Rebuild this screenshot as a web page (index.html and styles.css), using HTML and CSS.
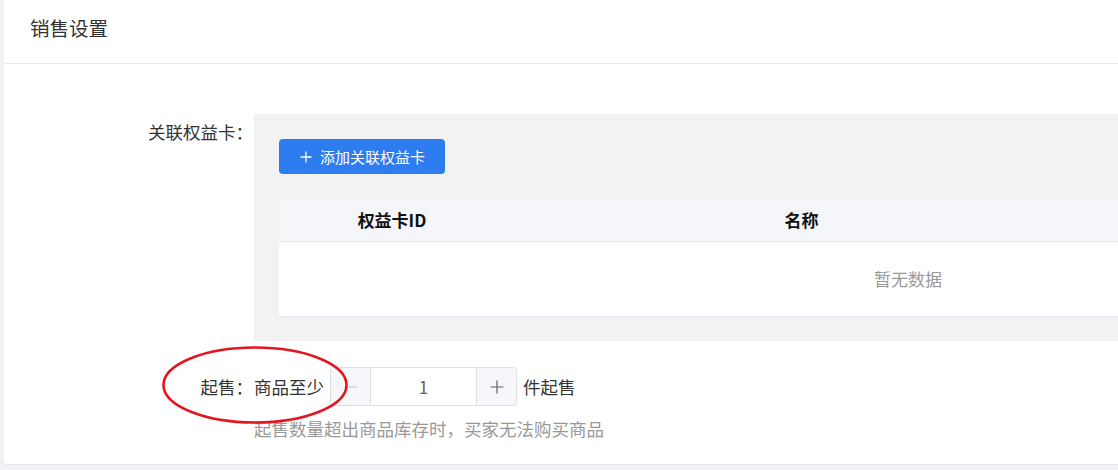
FILE: index.html
```html
<!DOCTYPE html>
<html lang="zh-CN">
<head>
<meta charset="utf-8">
<title>销售设置</title>
<link rel="stylesheet" href="styles.css">
</head>
<body>
<div class="page">
  <div class="card">
    <div class="card-header">销售设置</div>
    <div class="card-body">
      <div class="form-item">
        <div class="form-label label-top">关联权益卡：</div>
        <div class="panel">
          <button class="btn-primary" type="button">
            <svg class="btn-icon" width="12" height="12" viewBox="0 0 12 12"><path d="M6 0.5V11.5M0.5 6H11.5" stroke="#fff" stroke-width="1.3" fill="none"/></svg>
            <span>添加关联权益卡</span>
          </button>
          <div class="table">
            <div class="thead">
              <div class="th col-id">权益卡ID</div>
              <div class="th col-name">名称</div>
              <div class="th col-rest"></div>
            </div>
            <div class="tbody">暂无数据</div>
          </div>
        </div>
      </div>
      <div class="form-item item-min">
        <div class="form-label label-mid">起售：</div>
        <div class="form-content">
          <div class="inline-row">
            <span class="text">商品至少</span>
            <div class="input-number">
              <span class="step step-minus"><svg width="14" height="14" viewBox="0 0 14 14"><path d="M0.5 7H13.5" stroke="#c0c4cc" stroke-width="1.2"/></svg></span>
              <span class="value">1</span>
              <span class="step step-plus"><svg width="14" height="14" viewBox="0 0 14 14"><path d="M7 0.5V13.5M0.5 7H13.5" stroke="#606266" stroke-width="1.2"/></svg></span>
            </div>
            <span class="text">件起售</span>
          </div>
          <div class="hint">起售数量超出商品库存时，买家无法购买商品</div>
        </div>
      </div>
    </div>
  </div>
  <svg class="annotation" width="190" height="82" viewBox="0 0 190 82"><ellipse cx="94" cy="40" rx="91.5" ry="37.5" fill="none" stroke="#e3151f" stroke-width="2.6"/></svg>
</div>
</body>
</html>
```

FILE: styles.css
```css
* { box-sizing: border-box; }

html, body {
  margin: 0;
  padding: 0;
  background: #f0f2f5;
  width: 1118px;
  height: 470px;
  overflow: hidden;
}

body {
  font-family: "Noto Sans CJK SC", "Noto Sans", sans-serif;
  color: #333;
}

.page {
  position: relative;
  width: 1118px;
  height: 470px;
  overflow: hidden;
}

.card {
  margin-left: 4px;
  width: 1600px;
  height: 465px;
  background: #fff;
  border-radius: 0 0 4px 4px;
  border-bottom: 1px solid #e6e8ee;
}

.card-header {
  height: 64px;
  padding: 17px 0 0 26px;
  font-size: 19.5px;
  line-height: 22px;
  color: #333;
  border-bottom: 1px solid #e8e8f0;
}

.card-body {
  padding-top: 50px;
}

.form-item {
  display: flex;
}

.form-label {
  width: 250px;
  flex: none;
  text-align: right;
  font-size: 17.5px;
  color: #333;
  padding-right: 1px;
}

.label-top { line-height: 36px; }

.label-mid { line-height: 39px; }

.panel {
  width: 1340px;
  background: #f2f2f2;
  padding: 25px 25px 24px;
}

.btn-primary {
  display: flex;
  align-items: center;
  gap: 8px;
  height: 35px;
  width: 166px;
  padding: 0 0 0 21px;
  border: none;
  border-radius: 4px;
  background: #2d7cf0;
  color: #fff;
  font-family: inherit;
  font-size: 15px;
  line-height: 35px;
  cursor: pointer;
}

.btn-icon { flex: none; }

.table {
  margin-top: 25px;
  width: 1258px;
}

.thead {
  display: flex;
  height: 43px;
  background: #f5f6fa;
  border-bottom: 1px solid #e4e7ed;
}

.th {
  font-size: 17px;
  font-weight: 600;
  color: #111;
  line-height: 42px;
  text-align: center;
}

.col-id { width: 226px; }
.col-name { width: 593px; }
.col-rest { flex: 1; }

.tbody {
  height: 75px;
  background: #fff;
  border-bottom: 1px solid #e4e7ed;
  text-align: center;
  line-height: 74px;
  font-size: 17px;
  color: #999;
}

.item-min {
  margin-top: 26px;
}

.form-content {
  display: flex;
  flex-direction: column;
}

.inline-row {
  display: flex;
  align-items: center;
  gap: 6px;
  height: 39px;
}

.text {
  font-size: 17.5px;
  color: #333;
}

.input-number {
  display: flex;
  width: 187px;
  height: 39px;
  border: 1px solid #dcdfe6;
  border-radius: 4px;
  overflow: hidden;
  background: #fff;
}

.step {
  width: 40px;
  flex: none;
  display: flex;
  align-items: center;
  justify-content: center;
  background: #f5f7fa;
}

.step-minus { border-right: 1px solid #dcdfe6; }
.step-plus { border-left: 1px solid #dcdfe6; }

.value {
  flex: 1;
  text-align: center;
  font-size: 17px;
  line-height: 37px;
  color: #606266;
}

.hint {
  margin-top: 11px;
  font-size: 17.5px;
  line-height: 24px;
  color: #999;
}

.annotation {
  position: absolute;
  left: 161px;
  top: 345px;
}
```
